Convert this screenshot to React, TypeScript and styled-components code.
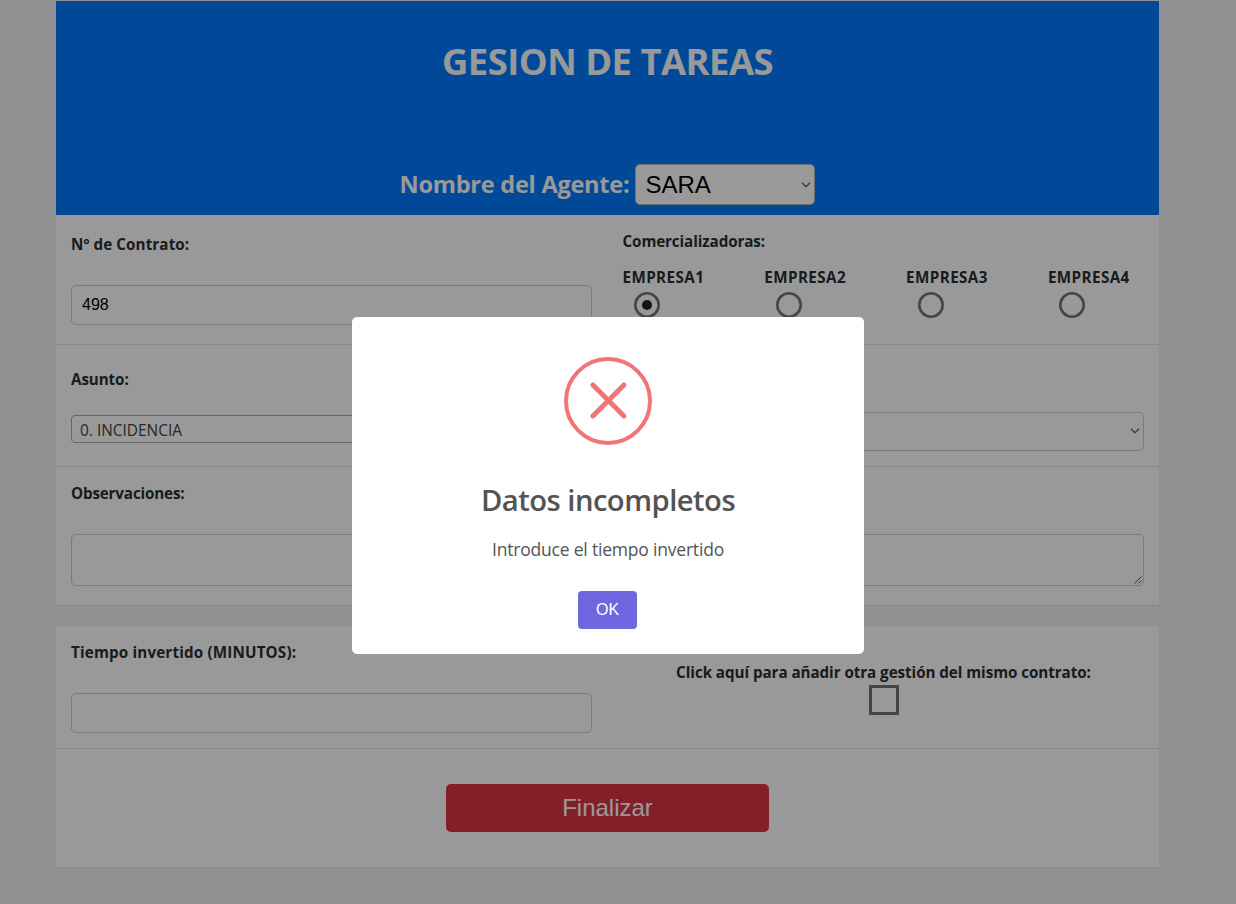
import React from "react";
import styled, { createGlobalStyle } from "styled-components";

const ui = `"Open Sans", "Noto Sans", sans-serif`;
const arial = `"Liberation Sans", Arial, sans-serif`;

const GlobalStyle = createGlobalStyle`
  *, *::before, *::after { box-sizing: border-box; }
  html, body { margin: 0; padding: 0; background: #edf0f3; }
  body { height: 904px; overflow: hidden; font-family: ${ui}; color: #2b2d31; }
  h1, h2, p { margin: 0; }
`;

const Page = styled.main`
  width: 1103px;
  margin: 1px 0 0 56px;
`;

const Header = styled.header`
  height: 214px;
  background: #007bff;
  color: #fff;
  display: flex;
  flex-direction: column;
  align-items: center;
  justify-content: space-between;
  padding: 32px 0 10px;
`;

const Title = styled.h1`
  font-size: 36.4px;
  line-height: 56px;
  font-weight: 700;
  white-space: nowrap;
  letter-spacing: -0.52px;
`;

const AgentRow = styled.div`
  display: flex;
  align-items: center;
  gap: 6px;
`;

const AgentLabel = styled.label`
  font-size: 23.6px;
  line-height: 36px;
  padding-bottom: 2px;
  font-weight: 700;
  white-space: nowrap;
  letter-spacing: -0.28px;
`;

const AgentSelect = styled.div`
  width: 180px;
  height: 41px;
  padding: 0 3px 0 9px;
  display: flex;
  align-items: center;
  justify-content: space-between;
  background: #fff;
  border: 1px solid #bbb;
  border-radius: 5px;
  color: #000;
  font: 24px/39px ${arial};
`;

const Row = styled.section<{ $h: number; $gapBefore?: number }>`
  display: grid;
  grid-template-columns: 551px 552px;
  height: ${(p) => p.$h}px;
  margin-top: ${(p) => p.$gapBefore ?? 0}px;
  background: #fff;
  border-bottom: 1px solid #dee2e6;
`;

const Cell = styled.div<{ $top: number; $wide?: boolean }>`
  grid-column: ${(p) => (p.$wide ? "1 / -1" : "auto")};
  padding: ${(p) => p.$top}px 15px 0;
  min-width: 0;
`;

const Label = styled.label<{ $gap?: number; $ls?: number; $indent?: number }>`
  display: block;
  font-size: 15.2px;
  line-height: 24px;
  font-weight: 700;
  white-space: nowrap;
  letter-spacing: ${(p) => p.$ls ?? -0.1}px;
  margin-bottom: ${(p) => p.$gap ?? 0}px;
  padding-left: ${(p) => p.$indent ?? 0}px;
`;

const Field = styled.div<{ $h: number }>`
  height: ${(p) => p.$h}px;
  border: 1px solid #ccc;
  border-radius: 5px;
  background: #fff;
  display: flex;
  align-items: center;
  padding: 0 10px;
  color: #000;
  font: 16px/24px ${arial};
`;

const SelectField = styled(Field)`
  justify-content: flex-end;
  padding: 0 3px 1px;
`;

const TextArea = styled(Field)`
  align-items: flex-end;
  justify-content: flex-end;
  padding: 0 1px 1px;
`;

const SearchSelect = styled.div`
  height: 28px;
  border: 1px solid #aaa;
  border-radius: 4px;
  padding: 0 8px;
  font-size: 15.4px;
  line-height: 29px;
  font-weight: 400;
  color: #444;
  letter-spacing: 0.02px;
`;

const Companies = styled.div`
  display: grid;
  grid-template-columns: repeat(4, 141.8px);
`;

const Company = styled.div`
  display: flex;
  flex-direction: column;
`;

const Radio = styled.span`
  width: 26px;
  height: 26px;
  margin: 3px 0 0 12px;
  box-shadow: inset 0 0 0 2.6px #747474;
  border-radius: 50%;
  display: grid;
  place-items: center;
`;

const RadioDot = styled.span`
  width: 10.4px;
  height: 10.4px;
  border-radius: 50%;
  background: #222;
`;

const CheckCell = styled.div`
  display: flex;
  flex-direction: column;
  align-items: center;
  padding-top: 34px;
`;

const CheckBox = styled.span`
  width: 30px;
  height: 30px;
  margin: 1px 0 0 2px;
  border: 3px solid #747474;
`;

const SubmitCell = styled.div`
  grid-column: 1 / -1;
  display: flex;
  justify-content: center;
  padding-top: 35px;
`;

const Submit = styled.button`
  width: 323px;
  height: 48px;
  border: 0;
  border-radius: 5px;
  background: #dc3545;
  color: #fff;
  font: 24px/48px ${arial};
  padding: 0;
`;

const Overlay = styled.div`
  position: fixed;
  inset: 0;
  background: rgba(0, 0, 0, 0.4);
  padding: 317px 0 0 352px;
`;

const Dialog = styled.div`
  width: 512px;
  height: 337px;
  background: #fff;
  border-radius: 5px;
  padding-top: 40px;
  display: flex;
  flex-direction: column;
  align-items: center;
`;

const DialogTitle = styled.h2`
  margin-top: 33px;
  font-size: 29.2px;
  line-height: 45px;
  font-weight: 600;
  color: #545454;
  white-space: nowrap;
  letter-spacing: -0.52px;
`;

const DialogText = styled.p`
  margin-top: 13px;
  font-size: 17.5px;
  line-height: 27px;
  color: #545454;
  white-space: nowrap;
  letter-spacing: -0.2px;
`;

const OkButton = styled.button`
  margin: 28px 1px 0 0;
  width: 59px;
  height: 38px;
  border: 0;
  border-radius: 4px;
  background: #7066e0;
  color: #fff;
  font: 16px/36px ${arial};
  padding: 0 0 1px;
`;

const Chevron = () => (
  <svg width="10" height="6" viewBox="0 0 10 6" fill="none">
    <path d="M1 0.8 L5 4.8 L9 0.8" stroke="#6a6a6a" strokeWidth="1.5" />
  </svg>
);

const ResizeGrip = () => (
  <svg width="8" height="8" viewBox="0 0 8 8" fill="none">
    <path d="M0.5 7.5 L7.5 0.5 M4.5 7.5 L7.5 4.5" stroke="#505050" strokeWidth="1" />
  </svg>
);

const ErrorIcon = () => (
  <svg width="88" height="88" viewBox="0 0 88 88" fill="none" stroke="#f27474">
    <circle cx="44" cy="44" r="42" strokeWidth="4" />
    <path d="M28.9 27.9 L59.9 58.9 M59.9 27.9 L28.9 58.9" strokeWidth="5" strokeLinecap="round" />
  </svg>
);

const companies = ["EMPRESA1", "EMPRESA2", "EMPRESA3", "EMPRESA4"];

export default function App() {
  return (
    <>
      <GlobalStyle />
      <Page>
        <Header>
          <Title>GESION DE TAREAS</Title>
          <AgentRow>
            <AgentLabel>Nombre del Agente:</AgentLabel>
            <AgentSelect>
              SARA
              <Chevron />
            </AgentSelect>
          </AgentRow>
        </Header>

        <Row $h={130}>
          <Cell $top={17}>
            <Label $gap={29} $ls={0.1}>Nº de Contrato:</Label>
            <Field $h={40}>498</Field>
          </Cell>
          <Cell $top={14}>
            <Label $gap={12} $indent={0.5}>Comercializadoras:</Label>
            <Companies>
              {companies.map((name, i) => (
                <Company key={name}>
                  <Label $ls={0.42} $indent={0.5}>{name}</Label>
                  <Radio>{i === 0 && <RadioDot />}</Radio>
                </Company>
              ))}
            </Companies>
          </Cell>
        </Row>

        <Row $h={122}>
          <Cell $top={22}>
            <Label $gap={24}>Asunto:</Label>
            <SearchSelect>0. INCIDENCIA</SearchSelect>
          </Cell>
          <Cell $top={67}>
            <SelectField $h={39}>
              <Chevron />
            </SelectField>
          </Cell>
        </Row>

        <Row $h={139}>
          <Cell $top={14} $wide>
            <Label $gap={29} $ls={-0.15}>Observaciones:</Label>
            <TextArea $h={52}>
              <ResizeGrip />
            </TextArea>
          </Cell>
        </Row>

        <Row $h={123} $gapBefore={20}>
          <Cell $top={14}>
            <Label $gap={29} $ls={0.17}>Tiempo invertido (MINUTOS):</Label>
            <Field $h={40} />
          </Cell>
          <CheckCell>
            <Label $ls={-0.06} $indent={1}>Click aquí para añadir otra gestión del mismo contrato:</Label>
            <CheckBox />
          </CheckCell>
        </Row>

        <Row $h={119}>
          <SubmitCell>
            <Submit>Finalizar</Submit>
          </SubmitCell>
        </Row>
      </Page>

      <Overlay>
        <Dialog role="dialog">
          <ErrorIcon />
          <DialogTitle>Datos incompletos</DialogTitle>
          <DialogText>Introduce el tiempo invertido</DialogText>
          <OkButton>OK</OkButton>
        </Dialog>
      </Overlay>
    </>
  );
}
